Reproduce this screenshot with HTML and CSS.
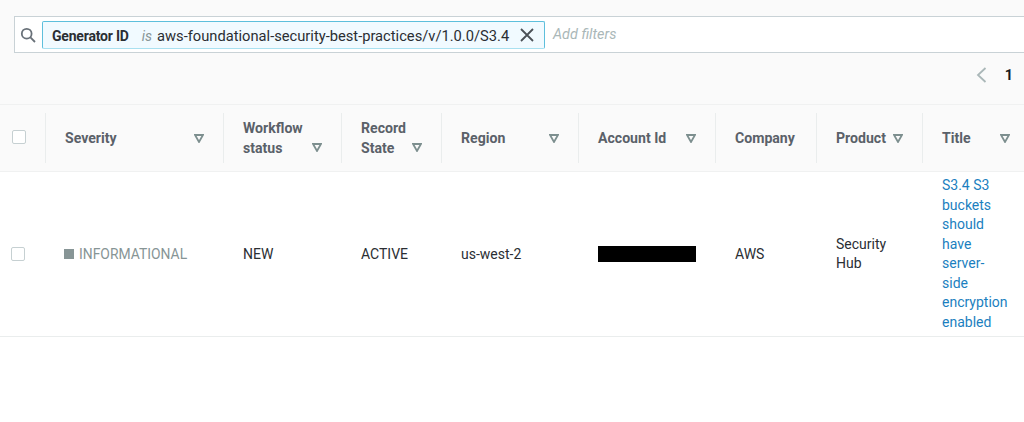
FILE: index.html
```html
<!DOCTYPE html>
<html lang="en">
<head>
<meta charset="utf-8">
<title>Security Hub findings</title>
<link rel="stylesheet" href="styles.css">
</head>
<body>
<main class="page">
  <div class="toolbar">
    <div class="search">
      <svg class="search-icon" width="16" height="16" viewBox="0 0 16 16"><circle cx="6.7" cy="6.7" r="4.9"/><path d="M10.400 10.400 15 15"/></svg>
      <div class="token">
        <span class="token-key">Generator ID</span>
        <span class="token-op">is</span>
        <span class="token-value">aws-foundational-security-best-practices/v/1.0.0/S3.4</span>
        <svg class="token-close" width="14" height="14" viewBox="0 0 14 14"><path d="M1 1 13 13M13 1 1 13"/></svg>
      </div>
      <span class="placeholder">Add filters</span>
    </div>
    <div class="pager">
      <svg class="pager-prev" width="11" height="16" viewBox="0 0 11 16"><path d="M9.500 1 2 8l7.500 7"/></svg>
      <span class="pager-num">1</span>
    </div>
  </div>

  <div class="table">
    <div class="row head">
      <div class="cell check"><span class="box"></span></div>
      <div class="cell sep"><span>Severity</span><svg class="sort" viewBox="0 0 10 9"><path d="M1 1h8L5 8z"/></svg></div>
      <div class="cell sep"><span>Workflow status</span><svg class="sort low" viewBox="0 0 10 9"><path d="M1 1h8L5 8z"/></svg></div>
      <div class="cell sep"><span>Record State</span><svg class="sort low" viewBox="0 0 10 9"><path d="M1 1h8L5 8z"/></svg></div>
      <div class="cell sep"><span>Region</span><svg class="sort" viewBox="0 0 10 9"><path d="M1 1h8L5 8z"/></svg></div>
      <div class="cell sep"><span>Account Id</span><svg class="sort" viewBox="0 0 10 9"><path d="M1 1h8L5 8z"/></svg></div>
      <div class="cell sep"><span>Company</span></div>
      <div class="cell sep"><span>Product</span><svg class="sort" viewBox="0 0 10 9"><path d="M1 1h8L5 8z"/></svg></div>
      <div class="cell sep last"><span>Title</span><svg class="sort" viewBox="0 0 10 9"><path d="M1 1h8L5 8z"/></svg></div>
    </div>
    <div class="row body">
      <div class="cell check"><span class="box"></span></div>
      <div class="cell"><span class="severity"><i class="sev-mark"></i>INFORMATIONAL</span></div>
      <div class="cell text">NEW</div>
      <div class="cell text">ACTIVE</div>
      <div class="cell text">us-west-2</div>
      <div class="cell"><span class="redacted"></span></div>
      <div class="cell text">AWS</div>
      <div class="cell">Security Hub</div>
      <div class="cell title"><a href="#">S3.4 S3 buckets should have server-side encryption enabled</a></div>
    </div>
  </div>
</main>
</body>
</html>
```
FILE: styles.css
```css
* { box-sizing: border-box; }
html, body { margin: 0; height: 100%; background: #fff; }
body { font-family: Roboto, "Open Sans", sans-serif; font-size: 14px; color: #16191f; overflow: hidden; }

.toolbar { background: #fafafa; height: 105px; padding-top: 16px; border-bottom: 1px solid #f0f1f1; }
.search { display: flex; align-items: center; height: 37px; margin-left: 14px; background: #fff; border: 1px solid #c9d2d6; border-right: 0; padding-left: 5px; }
.search-icon { fill: none; stroke: #687078; stroke-width: 1.8; margin-right: 6px; flex: none; }
.token { display: flex; align-items: center; width: 503px; height: 28px; background: #f1faff; border: 1px solid #5dbfdc; border-bottom-color: #a9e0f0; border-radius: 2px; padding: 2px 0 0 9px; white-space: nowrap; }
.token-key { font-size: 14px; letter-spacing: -0.2px; font-weight: 700; color: #2a2e33; }
.token-op { font-size: 14px; font-style: italic; color: #879596; margin: 0 5px 0 13px; }
.token-value { font-size: 14.7px; color: #2a2e33; }
.token-close { fill: none; stroke: #4b5157; stroke-width: 1.8; margin: -2px 10px 0 auto; }
.placeholder { margin-left: 8px; font-size: 14.4px; font-style: italic; color: #aab7b8; }

.pager { display: flex; align-items: center; justify-content: flex-end; height: 44px; padding-right: 11px; }
.pager-prev { fill: none; stroke: #aab7b8; stroke-width: 1.800; margin-right: 18px; }
.pager-num { font-size: 14.4px; font-weight: 700; color: #16191f; }

.row { display: grid; grid-template-columns: 45px 178px 118px 100px 137px 137px 101px 106px 102px; }
.head { height: 66px; background: #fafafa; color: #5a6169; font-size: 14.1px; font-weight: 700; line-height: 20px; align-items: center; }
.head .cell { height: 50px; }
.body { height: 166px; align-items: center; border-top: 1px solid #f0f1f1; border-bottom: 1px solid #eaeded; line-height: 19.5px; color: #2a2e33; }

.cell { padding: 0 19px 0 20px; display: flex; align-items: center; }
.text { padding-top: 2px; }
.check { padding: 0 0 0 11px; }
.sep { border-left: 1px solid #eaeded; padding-left: 19px; justify-content: space-between; }
.sep.last { padding-right: 14px; }
.box { display: block; width: 14px; height: 14px; background: #fff; border: 1px solid #c6d0d2; border-radius: 2px; }
.head .box { margin: 0 0 3px 1px; }

.sort { flex: none; width: 10px; height: 9px; fill: none; stroke: #7d8f8f; stroke-width: 1.800; }
.sort.low { align-self: flex-end; margin: 0 0 11px; }

.severity { display: flex; align-items: center; margin-left: -1px; padding-top: 2px; font-size: 13.9px; color: #879596; white-space: nowrap; }
.sev-mark { display: block; width: 10px; height: 10px; margin: -2px 5px 0 0; background: #879596; }
.redacted { display: block; width: 99px; height: 16px; background: #000; }
.title { padding-right: 14px; }
.title a { color: #1b7fc0; text-decoration: none; }
```
